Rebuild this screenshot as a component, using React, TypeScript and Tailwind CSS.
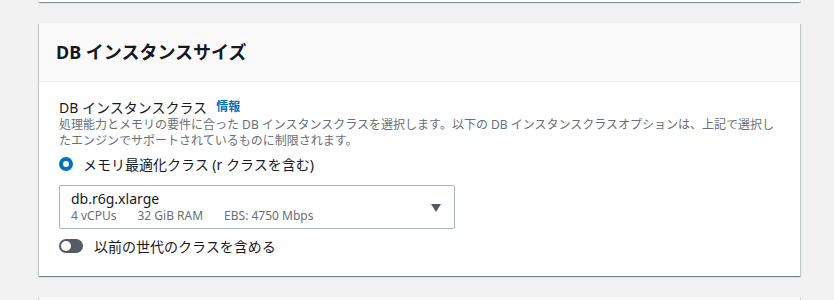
import React from 'react';

const FONT = { fontFamily: '"Noto Sans", "Noto Sans CJK JP", sans-serif' };

const cardShadow =
  'shadow-[0_1px_1px_0_rgba(0,28,36,0.3),1px_1px_1px_0_rgba(0,28,36,0.15),-1px_1px_1px_0_rgba(0,28,36,0.15)]';

export default function App() {
  return (
    <div className="w-[834px] h-[300px] overflow-hidden bg-[#f2f2f2] pl-[39px] pr-[34px]" style={FONT}>
      {/* tail of the previous card */}
      <div className={`h-[2px] bg-white ${cardShadow}`} />

      {/* DB instance size card */}
      <div className={`mt-[21px] bg-white ${cardShadow}`}>
        <div className="h-[59px] flex items-center px-[17px] bg-[#fafafa] border-b border-[#eaeded]">
          <h2 className="text-[18px] font-bold text-[#16191f] leading-none">DB インスタンスサイズ</h2>
        </div>

        <div className="px-[20px] pt-[15px] pb-[21px]">
          <div className="flex items-center gap-[9px] h-[20px]">
            <span className="text-[14px] text-[#16191f]">DB インスタンスクラス</span>
            <span className="text-[12px] font-bold text-[#0073bb]">情報</span>
          </div>
          <p className="text-[12px] leading-[16px] text-[#687078]">
            処理能力とメモリの要件に合った DB インスタンスクラスを選択します。以下の DB インスタンスクラスオプションは、上記で選択し
            <br />
            たエンジンでサポートされているものに制限されます。
          </p>

          <label className="mt-[5px] flex items-center gap-[10px] h-[20px]">
            <span className="w-[14px] h-[14px] rounded-full border-[4px] border-[#0073bb] bg-white shrink-0" />
            <span className="text-[14px] text-[#16191f]">メモリ最適化クラス (r クラスを含む)</span>
          </label>

          <div className="mt-[11px] w-[396px] h-[44px] border border-[#aab7b8] rounded-[2px] flex items-center pl-[11px] pr-[13px]">
            <div className="flex-1">
              <div className="text-[14px] leading-[18px] text-[#16191f]">db.r6g.xlarge</div>
              <div className="flex gap-[21px] text-[12px] leading-[16px] text-[#687078]">
                <span>4 vCPUs</span>
                <span>32 GiB RAM</span>
                <span>EBS: 4750 Mbps</span>
              </div>
            </div>
            <svg width="10" height="8" viewBox="0 0 10 8" className="mt-[2px]">
              <path d="M0 0h10L5 8z" fill="#545b64" />
            </svg>
          </div>

          <div className="mt-[8px] flex items-center gap-[11px] h-[18px]">
            <span className="w-[24px] h-[14px] rounded-full bg-[#545b64] flex items-center pl-[2px] shrink-0">
              <span className="w-[10px] h-[10px] rounded-full bg-white" />
            </span>
            <span className="text-[14px] text-[#16191f]">以前の世代のクラスを含める</span>
          </div>
        </div>
      </div>

      {/* next card */}
      <div className={`mt-[21px] h-[20px] bg-[#fafafa] ${cardShadow}`} />
    </div>
  );
}
